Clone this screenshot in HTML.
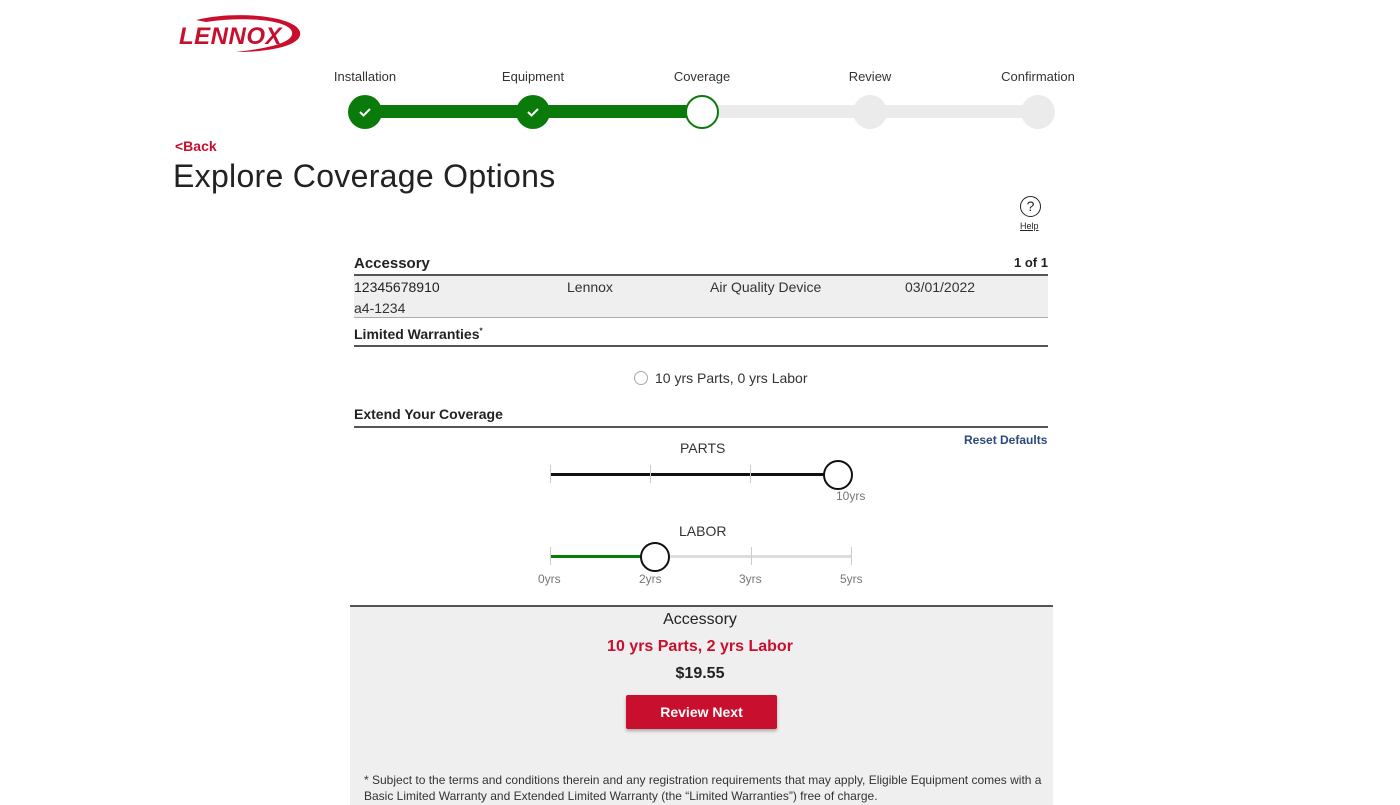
<!DOCTYPE html>
<html><head><meta charset="utf-8"><style>
*{margin:0;padding:0;box-sizing:border-box}
body{width:1400px;height:800px;overflow:hidden;background:#fff;font-family:"Liberation Sans",sans-serif;color:#222;position:relative}
.a{position:absolute;white-space:nowrap}
.lbl{font-size:13px;color:#333;transform:translateX(-50%)}
.dot{position:absolute;width:34px;height:34px;border-radius:50%;top:95px;transform:translateX(-50%)}
.b{font-weight:bold}
</style></head><body>
<svg class="a" style="left:176px;top:14px" width="128" height="40" viewBox="0 0 128 40">
<path d="M20 6 C60 -4 120 2 124 18 C127 30 100 38 60 38 C95 34 118 28 116 18 C113 6 70 2 30 8 Z" fill="#c8102e"/>
<text x="3" y="30" font-family="Liberation Sans" font-weight="bold" font-style="italic" font-size="24" fill="#c8102e" letter-spacing="0.5">LENNOX</text>
</svg>
<div class="a lbl" style="left:365px;top:69px">Installation</div>
<div class="a lbl" style="left:533px;top:69px">Equipment</div>
<div class="a lbl" style="left:702px;top:69px">Coverage</div>
<div class="a lbl" style="left:870px;top:69px">Review</div>
<div class="a lbl" style="left:1038px;top:69px">Confirmation</div>
<div class="a" style="left:365px;top:105px;width:673px;height:13px;background:#ebebeb"></div>
<div class="a" style="left:365px;top:105px;width:337px;height:13px;background:#0a7a0a"></div>
<div class="dot" style="left:365px;background:#0a7a0a"><svg width="34" height="34"><path d="M12 17 L15.5 20.5 L22 14" stroke="#fff" stroke-width="2" fill="none"/></svg></div>
<div class="dot" style="left:533px;background:#0a7a0a"><svg width="34" height="34"><path d="M12 17 L15.5 20.5 L22 14" stroke="#fff" stroke-width="2" fill="none"/></svg></div>
<div class="dot" style="left:702px;background:#fff;border:2px solid #0a7a0a"></div>
<div class="dot" style="left:870px;background:#ebebeb"></div>
<div class="dot" style="left:1038px;background:#ebebeb"></div>
<div class="a b" style="left:175px;top:138px;font-size:14px;color:#c8102e">&lt;Back</div>
<div class="a" style="left:173px;top:158px;font-size:32px;color:#222;letter-spacing:0.3px">Explore Coverage Options</div>
<div class="a" style="left:1020px;top:196px;width:21px;height:21px;border:1.5px solid #222;border-radius:50%;text-align:center;font-size:14px;line-height:18px">?</div>
<div class="a" style="left:1020px;top:221px;font-size:9px;text-decoration:underline">Help</div>
<div class="a b" style="left:354px;top:255px;font-size:15px">Accessory</div>
<div class="a b" style="left:1014px;top:255px;font-size:13px">1 of 1</div>
<div class="a" style="left:354px;top:274px;width:694px;height:2px;background:#555"></div>
<div class="a" style="left:354px;top:276px;width:694px;height:42px;background:#efefef;border-bottom:1px solid #aaa"></div>
<div class="a" style="left:354px;top:279px;font-size:14px">12345678910</div>
<div class="a" style="left:354px;top:300px;font-size:14px;color:#333">a4-1234</div>
<div class="a" style="left:567px;top:279px;font-size:14px;color:#333">Lennox</div>
<div class="a" style="left:710px;top:279px;font-size:14px;color:#333">Air Quality Device</div>
<div class="a" style="left:905px;top:279px;font-size:14px;color:#333">03/01/2022</div>
<div class="a b" style="left:354px;top:326px;font-size:14px">Limited Warranties<sup style="font-size:8px">*</sup></div>
<div class="a" style="left:354px;top:345px;width:694px;height:2px;background:#555"></div>
<div class="a" style="left:634px;top:371px;width:14px;height:14px;border:1px solid #aaa;border-radius:50%"></div>
<div class="a" style="left:655px;top:370px;font-size:14px;color:#333">10 yrs Parts, 0 yrs Labor</div>
<div class="a b" style="left:354px;top:406px;font-size:14px">Extend Your Coverage</div>
<div class="a" style="left:354px;top:426px;width:694px;height:2px;background:#555"></div>
<div class="a b" style="left:964px;top:433px;font-size:12px;color:#2b4a7a">Reset Defaults</div>
<div class="a" style="left:680px;top:440px;font-size:14px;color:#333">PARTS</div>
<div class="a" style="left:550px;top:473px;width:300px;height:3px;background:#111"></div>
<div class="a" style="left:550px;top:465px;width:1px;height:18px;background:#ccc"></div>
<div class="a" style="left:650px;top:465px;width:1px;height:18px;background:#ccc"></div>
<div class="a" style="left:750px;top:465px;width:1px;height:18px;background:#ccc"></div>
<div class="a" style="left:823px;top:460px;width:30px;height:30px;border:2px solid #111;border-radius:50%;background:#fff"></div>
<div class="a" style="left:836px;top:489px;font-size:12px;color:#777">10yrs</div>
<div class="a" style="left:679px;top:523px;font-size:14px;color:#333">LABOR</div>
<div class="a" style="left:550px;top:555px;width:302px;height:3px;background:#ddd"></div>
<div class="a" style="left:550px;top:555px;width:100px;height:3px;background:#0a7a0a"></div>
<div class="a" style="left:550px;top:547px;width:1px;height:18px;background:#ccc"></div>
<div class="a" style="left:751px;top:547px;width:1px;height:18px;background:#ccc"></div>
<div class="a" style="left:851px;top:547px;width:1px;height:18px;background:#ccc"></div>
<div class="a" style="left:640px;top:542px;width:30px;height:30px;border:2px solid #111;border-radius:50%;background:#fff"></div>
<div class="a" style="left:538px;top:572px;font-size:12px;color:#777">0yrs</div>
<div class="a" style="left:639px;top:572px;font-size:12px;color:#777">2yrs</div>
<div class="a" style="left:739px;top:572px;font-size:12px;color:#777">3yrs</div>
<div class="a" style="left:840px;top:572px;font-size:12px;color:#777">5yrs</div>
<div class="a" style="left:350px;top:605px;width:703px;height:200px;background:#efefef;border-top:2px solid #555"></div>
<div class="a" style="left:0;width:1400px;text-align:center;top:611px;font-size:16px;color:#222">Accessory</div>
<div class="a b" style="left:0;width:1400px;text-align:center;top:638px;font-size:16px;color:#c8102e">10 yrs Parts, 2 yrs Labor</div>
<div class="a b" style="left:0;width:1400px;text-align:center;top:665px;font-size:16px">$19.55</div>
<div class="a b" style="left:626px;top:695px;width:151px;height:34px;background:#c8102e;color:#fff;border-radius:2px;text-align:center;line-height:34px;font-size:14px;box-shadow:0 2px 3px rgba(0,0,0,.3)">Review Next</div>
<div class="a" style="left:364px;top:772px;font-size:12px;color:#333;line-height:16px">* Subject to the terms and conditions therein and any registration requirements that may apply, Eligible Equipment comes with a<br>Basic Limited Warranty and Extended Limited Warranty (the “Limited Warranties”) free of charge.</div>
</body></html>
